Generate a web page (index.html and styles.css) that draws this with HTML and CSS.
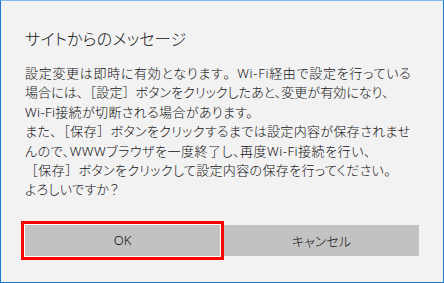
FILE: index.html
```html
<!DOCTYPE html>
<html lang="ja">
<head>
<meta charset="utf-8">
<link rel="stylesheet" href="styles.css">
</head>
<body>
<div class="dialog">
  <div class="title">サイトからのメッセージ</div>
  <div class="message">
    <div class="line line-loose">設定変更は即時に有効となります<span class="fw">。</span>Wi-Fi経由で設定を行っている</div>
    <div class="line line-tight">場合には、<span class="fw">［</span>設定<span class="fw">］</span>ボタンをクリックしたあと、変更が有効になり、</div>
    <div class="line">Wi-Fi接続が切断される場合があります。</div>
    <div class="line">また、<span class="fw">［</span>保存<span class="fw">］</span>ボタンをクリックするまでは設定内容が保存されませ</div>
    <div class="line line-mid">んので、WWWブラウザを一度終了し、再度Wi-Fi接続を行い、</div>
    <div class="line"><span class="fw">［</span>保存<span class="fw">］</span>ボタンをクリックして設定内容の保存を行ってください。</div>
    <div class="line">よろしいですか？</div>
  </div>
  <div class="buttons">
    <button class="btn btn-focused">OK</button>
    <button class="btn">キャンセル</button>
  </div>
</div>
</body>
</html>
```
FILE: styles.css
```css
html, body {
  margin: 0;
  padding: 0;
  width: 444px;
  height: 283px;
  overflow: hidden;
  background: #f2f2f2;
}
.dialog {
  box-sizing: border-box;
  width: 444px;
  height: 283px;
  background: #f2f2f2;
  border: 1px solid #1a78d2;
  border-top-color: #80b8f0;
  padding: 27px 24px 0 24px;
  font-family: "Noto Sans", "Noto Sans CJK JP", sans-serif;
  font-weight: 300;
  color: #111;
  font-feature-settings: "palt";
}
.title {
  font-size: 16px;
  line-height: 22px;
  letter-spacing: 0.2px;
}
.message {
  margin-top: 14px;
  font-size: 13px;
  line-height: 19.4px;
  letter-spacing: 0.35px;
  text-spacing-trim: space-all;
}
.fw {
  font-feature-settings: normal;
}
.line {
  white-space: nowrap;
}
.line-loose {
  letter-spacing: 0.7px;
}
.line-tight {
  letter-spacing: 0.05px;
}
.line-mid {
  letter-spacing: 0.5px;
}
.buttons {
  display: flex;
  gap: 4px;
  margin-top: 25px;
}
.btn {
  width: 195px;
  height: 31px;
  border: none;
  background: #c2c2c2;
  font-family: "Noto Sans", "Noto Sans CJK JP", sans-serif;
  font-weight: 300;
  font-size: 13px;
  color: #111;
  padding: 0;
  margin: 0;
  font-feature-settings: "palt";
}
.btn-focused {
  box-shadow: 0 0 0 1px #fff, 0 0 0 4px #ff0000;
}
```
